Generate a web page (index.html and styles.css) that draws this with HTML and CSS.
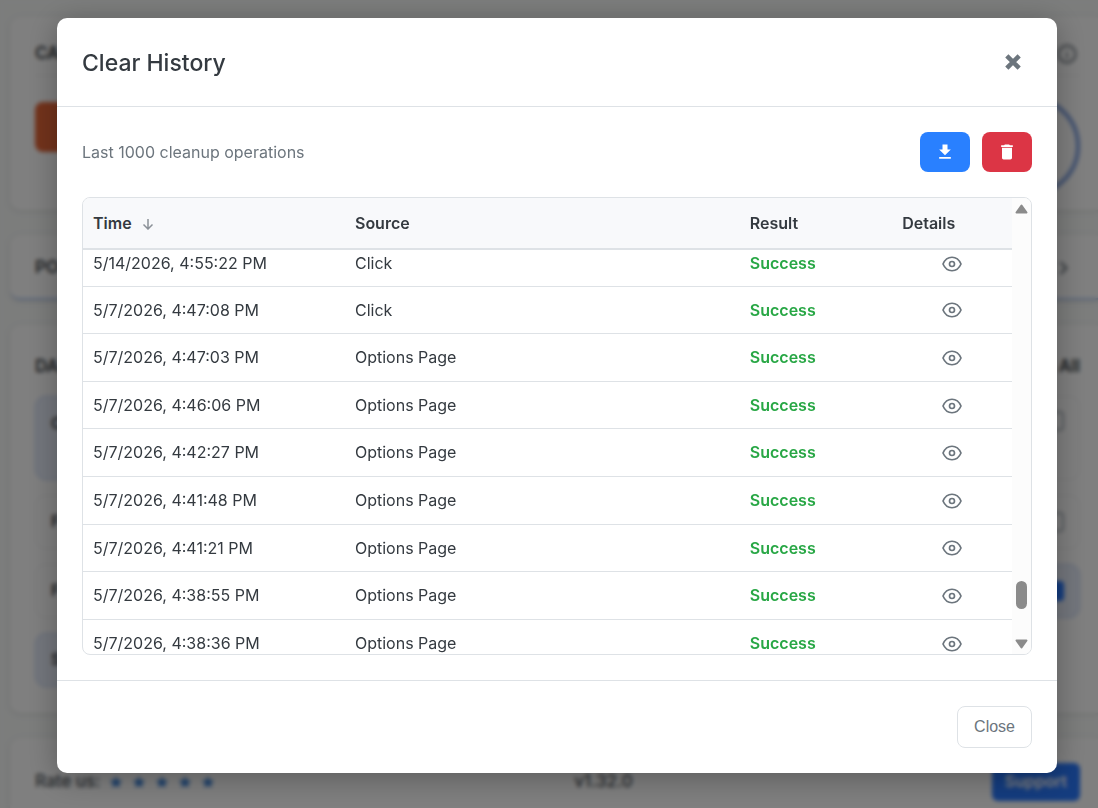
FILE: index.html
```html
<!DOCTYPE html>
<html lang="en">
<head>
<meta charset="utf-8">
<meta name="viewport" content="width=device-width, initial-scale=1">
<title>Clear History</title>
<link rel="stylesheet" href="styles.css">
</head>
<body>
<svg class="sprite" aria-hidden="true">
  <symbol id="eye" viewBox="0 0 24 24"><path d="M1.200 12C3.500 6.600 7.400 3.900 12 3.900S20.500 6.600 22.800 12C20.500 17.400 16.600 20.100 12 20.100S3.500 17.400 1.200 12Z"/><circle cx="12" cy="12" r="3"/></symbol>
  <symbol id="star" viewBox="0 0 16 16"><path d="M8 1l2.100 4.700 5.100.5-3.800 3.400 1.100 5L8 12l-4.500 2.600 1.100-5L.8 6.200l5.100-.5z"/></symbol>
</svg>
<main class="page">
  <section class="card card-cache">
    <div class="card-head"><span>CA</span>
      <svg class="info" viewBox="0 0 20 20"><circle cx="10" cy="10" r="8.500"/><path d="M10 9v5M10 6v1"/></svg>
    </div>
    <div class="cache-body"><div class="clear-block"></div><div class="ring"></div></div>
  </section>
  <section class="card card-popup"><span>PO</span>
    <svg class="chevron" viewBox="0 0 10 14"><path d="M2 2l5 5-5 5"/></svg>
  </section>
  <section class="card card-data">
    <div class="data-head"><span>DA</span><span>All</span></div>
    <div class="options">
      <div class="column">
        <div class="option tall selected"><span>C</span><i class="box checked"></i></div>
        <div class="option"><span>F</span><i class="box"></i></div>
        <div class="option"><span>F</span><i class="box"></i></div>
        <div class="option selected"><span>S</span><i class="box checked"></i></div>
      </div>
      <div class="column">
        <div class="option tall"><i class="box"></i></div>
        <div class="option"><i class="box"></i></div>
        <div class="option selected"><i class="box checked"></i></div>
      </div>
    </div>
  </section>
  <footer class="card card-foot">
    <div class="rate"><span>Rate us:</span>
      <svg><use href="#star"/></svg><svg><use href="#star"/></svg><svg><use href="#star"/></svg><svg><use href="#star"/></svg><svg><use href="#star"/></svg>
    </div>
    <span>v1.32.0</span>
    <a class="support" href="#support">Support</a>
  </footer>
</main>

<div class="backdrop">
  <div class="modal" role="dialog" aria-modal="true" aria-labelledby="title">
    <header class="modal-head">
      <h2 id="title">Clear History</h2>
      <button class="dismiss" type="button" aria-label="Dismiss"><svg viewBox="0 0 16 16"><path d="M2.500 2.500l11 11M13.500 2.500l-11 11"/></svg></button>
    </header>
    <div class="modal-body">
      <div class="toolbar">
        <p>Last 1000 cleanup operations</p>
        <div class="actions">
          <button class="action download" type="button" aria-label="Download history"><svg viewBox="0 0 24 24"><path d="M19 9h-4V3H9v6H5l7 7 7-7zM5 18v2h14v-2H5z"/></svg></button>
          <button class="action delete" type="button" aria-label="Delete history"><svg viewBox="0 0 24 24"><path d="M6 19c0 1.100.9 2 2 2h8c1.100 0 2-.9 2-2V7H6v12zM19 4h-3.500l-1-1h-5l-1 1H5v2h14V4z"/></svg></button>
        </div>
      </div>
      <div class="table-frame">
        <table class="history">
          <colgroup><col class="col-time"><col class="col-source"><col class="col-result"><col class="col-details"></colgroup>
          <thead><tr><th scope="col">Time <svg class="sort" viewBox="0 0 12 12"><path d="M6 1v10M1.500 6.500L6 11l4.500-4.500"/></svg></th><th scope="col">Source</th><th scope="col">Result</th><th scope="col">Details</th></tr></thead>
          <tbody>
            <tr class="first"><td>5/14/2026, 4:55:22 PM</td><td>Click</td><td class="ok">Success</td><td><button class="view" type="button" aria-label="View details"><svg><use href="#eye"/></svg></button></td></tr>
            <tr><td>5/7/2026, 4:47:08 PM</td><td>Click</td><td class="ok">Success</td><td><button class="view" type="button" aria-label="View details"><svg><use href="#eye"/></svg></button></td></tr>
            <tr><td>5/7/2026, 4:47:03 PM</td><td>Options Page</td><td class="ok">Success</td><td><button class="view" type="button" aria-label="View details"><svg><use href="#eye"/></svg></button></td></tr>
            <tr><td>5/7/2026, 4:46:06 PM</td><td>Options Page</td><td class="ok">Success</td><td><button class="view" type="button" aria-label="View details"><svg><use href="#eye"/></svg></button></td></tr>
            <tr><td>5/7/2026, 4:42:27 PM</td><td>Options Page</td><td class="ok">Success</td><td><button class="view" type="button" aria-label="View details"><svg><use href="#eye"/></svg></button></td></tr>
            <tr><td>5/7/2026, 4:41:48 PM</td><td>Options Page</td><td class="ok">Success</td><td><button class="view" type="button" aria-label="View details"><svg><use href="#eye"/></svg></button></td></tr>
            <tr><td>5/7/2026, 4:41:21 PM</td><td>Options Page</td><td class="ok">Success</td><td><button class="view" type="button" aria-label="View details"><svg><use href="#eye"/></svg></button></td></tr>
            <tr><td>5/7/2026, 4:38:55 PM</td><td>Options Page</td><td class="ok">Success</td><td><button class="view" type="button" aria-label="View details"><svg><use href="#eye"/></svg></button></td></tr>
            <tr><td>5/7/2026, 4:38:36 PM</td><td>Options Page</td><td class="ok">Success</td><td><button class="view" type="button" aria-label="View details"><svg><use href="#eye"/></svg></button></td></tr>
          </tbody>
        </table>
        <div class="scrollbar" aria-hidden="true">
          <svg class="arrow" viewBox="0 0 13 10"><path d="M6.500 1.500L11.500 8.500H1.500Z"/></svg>
          <div class="track"><div class="thumb"></div></div>
          <svg class="arrow" viewBox="0 0 13 10"><path d="M6.500 8.500L11.500 1.500H1.500Z"/></svg>
        </div>
      </div>
    </div>
    <footer class="modal-foot"><button class="close" type="button">Close</button></footer>
  </div>
</div>
</body>
</html>
```
FILE: styles.css
```css
* { box-sizing: border-box; }

body {
  margin: 0;
  height: 100vh;
  overflow: hidden;
  background: #f8faf9;
  color: #343a40;
  font-family: Inter, "Liberation Sans", sans-serif;
  font-size: 16px;
  line-height: 1.6;
}

button { font: inherit; cursor: pointer; }
.sprite { display: none; }

/* Options page under the dialog */
.page {
  display: flex;
  flex-direction: column;
  gap: 25px;
  margin-right: -7px;
  padding: 17px 0 0 10px;
  font-weight: 600;
}

.card {
  padding: 0 25px;
  background: #fff;
  border-radius: 10px;
  box-shadow: 0 1px 5px rgba(0, 0, 0, 0.12);
}

.card-cache { height: 193px; overflow: hidden; font-size: 17px; }
.card-head {
  display: flex;
  justify-content: space-between;
  align-items: center;
  height: 59px;
  padding-top: 16px;
  border-bottom: 1px solid #eee;
}
.info { width: 20px; height: 20px; margin-right: 3px; fill: none; stroke: #6c757d; stroke-width: 2; }
.cache-body { display: flex; justify-content: space-between; align-items: flex-start; }
.clear-block { width: 200px; height: 50px; margin-top: 26px; border-radius: 8px; background: #e66638; }
.ring { width: 100px; height: 100px; margin-top: 20px; border: 4px solid #7d9fe0; border-radius: 50%; }

.card-popup {
  display: flex;
  justify-content: space-between;
  align-items: center;
  height: 65px;
  padding-top: 3px;
  border-bottom: 2px solid #b4ccf5;
  font-size: 17px;
}
.chevron { width: 12px; height: 16px; margin-right: 10px; fill: none; stroke: #6c757d; stroke-width: 2; }

.card-data { height: 388px; padding-top: 28px; }
.data-head { display: flex; justify-content: space-between; margin-bottom: 16px; font-size: 17px; }
.options { display: grid; grid-template-columns: 1fr 1fr; gap: 15px; }
.column { display: flex; flex-direction: column; gap: 15px; }
.option {
  display: flex;
  align-items: center;
  height: 54px;
  padding: 0 15px;
  border: 1px solid #eef0f2;
  border-radius: 10px;
}
.option.tall { height: 84px; align-items: flex-start; padding-top: 14px; }
.option.selected { background: #e8eefa; border-color: #c3d3f2; }
.box { width: 20px; height: 20px; margin-left: auto; border: 2px solid #adb5bd; border-radius: 4px; }
.box.checked { background: #2979ff; border-color: #2979ff; }

.card-foot {
  display: flex;
  justify-content: space-between;
  align-items: center;
  height: 88px;
  color: #495057;
  font-size: 17px;
  font-weight: 500;
}
.rate { display: flex; align-items: center; gap: 9px; }
.rate svg { width: 14px; height: 14px; fill: #3d82d6; }
.support {
  padding: 6px 13px;
  border-radius: 6px;
  background: #2979ff;
  color: #fff;
  font-size: 16px;
  font-weight: 600;
  text-decoration: none;
}

/* Dialog */
.backdrop {
  position: fixed;
  inset: 0;
  display: flex;
  justify-content: center;
  align-items: flex-start;
  padding: 18px 0 0 16px;
  background: rgba(0, 0, 0, 0.5);
  backdrop-filter: blur(2px);
}

.modal {
  width: 94%;
  max-width: 1000px;
  background: #fff;
  border-radius: 10px;
  box-shadow: 0 5px 30px rgba(0, 0, 0, 0.3);
}

.modal-head {
  display: flex;
  justify-content: space-between;
  align-items: center;
  padding: 25px;
  border-bottom: 1px solid #dee2e6;
}
.modal-head h2 { margin: 0; padding-top: 2px; font-size: 23px; font-weight: 500; line-height: 36px; }

.dismiss {
  display: flex;
  margin-right: 10px;
  padding: 0;
  border: 0;
  background: none;
}
.dismiss svg { width: 18px; height: 18px; fill: none; stroke: #6c757d; stroke-width: 4; }

.modal-body { padding: 25px; }
.toolbar {
  display: flex;
  justify-content: space-between;
  align-items: center;
  margin-bottom: 25px;
}
.toolbar p { margin: 0; padding-top: 2px; color: #6c757d; }
.actions { display: flex; gap: 12px; }
.action {
  display: flex;
  justify-content: center;
  align-items: center;
  width: 50px;
  height: 40px;
  border: 0;
  border-radius: 8px;
}
.action svg { width: 20px; height: 20px; fill: #fff; }
.download { background: #2980ff; }
.delete { background: #dc3545; }

.table-frame {
  display: flex;
  align-items: flex-start;
  max-height: 458px;
  overflow: hidden;
  border: 1px solid #dee2e6;
  border-radius: 8px;
}

.history {
  flex: 1;
  width: 100%;
  table-layout: fixed;
  border-collapse: separate;
  border-spacing: 0;
}
.col-time { width: 28.2%; }
.col-source { width: 42.5%; }
.col-result { width: 16.4%; }
.col-details { width: 12.9%; }

.history th {
  height: 52px;
  padding: 2px 10px 0;
  background: #f8f9fb;
  border-bottom: 2px solid #dee2e6;
  font-weight: 600;
  text-align: left;
}
.sort { width: 12px; height: 12px; margin-left: 6px; vertical-align: -1px; fill: none; stroke: #8b9198; stroke-width: 1.5; }

.history td { padding: 11px 10px 10px; border-bottom: 1px solid #dee2e6; }
.history .first td { padding-top: 1px; padding-bottom: 9px; }
.history .ok { color: #28a745; font-weight: 600; }

.view {
  display: flex;
  margin: 0 auto;
  padding: 0;
  border: 0;
  background: none;
}
.view svg { width: 20px; height: 20px; fill: none; stroke: #6c757d; stroke-width: 2; }

.scrollbar {
  display: flex;
  flex-direction: column;
  align-items: center;
  align-self: stretch;
  width: 19px;
  max-height: 456px;
  padding: 6px 0 5px;
  background: #fcfcfc;
}
.arrow { width: 13px; height: 10px; fill: #8b8b8b; stroke: #8b8b8b; stroke-width: 2; stroke-linejoin: round; }
.track { display: flex; flex: 1; flex-direction: column; justify-content: flex-end; padding-bottom: 30px; }
.thumb { width: 11px; height: 28px; border-radius: 6px; background: #8b8b8b; }

.modal-foot {
  display: flex;
  justify-content: flex-end;
  padding: 25px;
  border-top: 1px solid #dee2e6;
}
.close {
  height: 42px;
  padding: 0 16px;
  border: 1px solid #dee2e6;
  border-radius: 8px;
  background: #fff;
  color: #6c757d;
  font-family: "Liberation Sans", Arial, sans-serif;
}
```
